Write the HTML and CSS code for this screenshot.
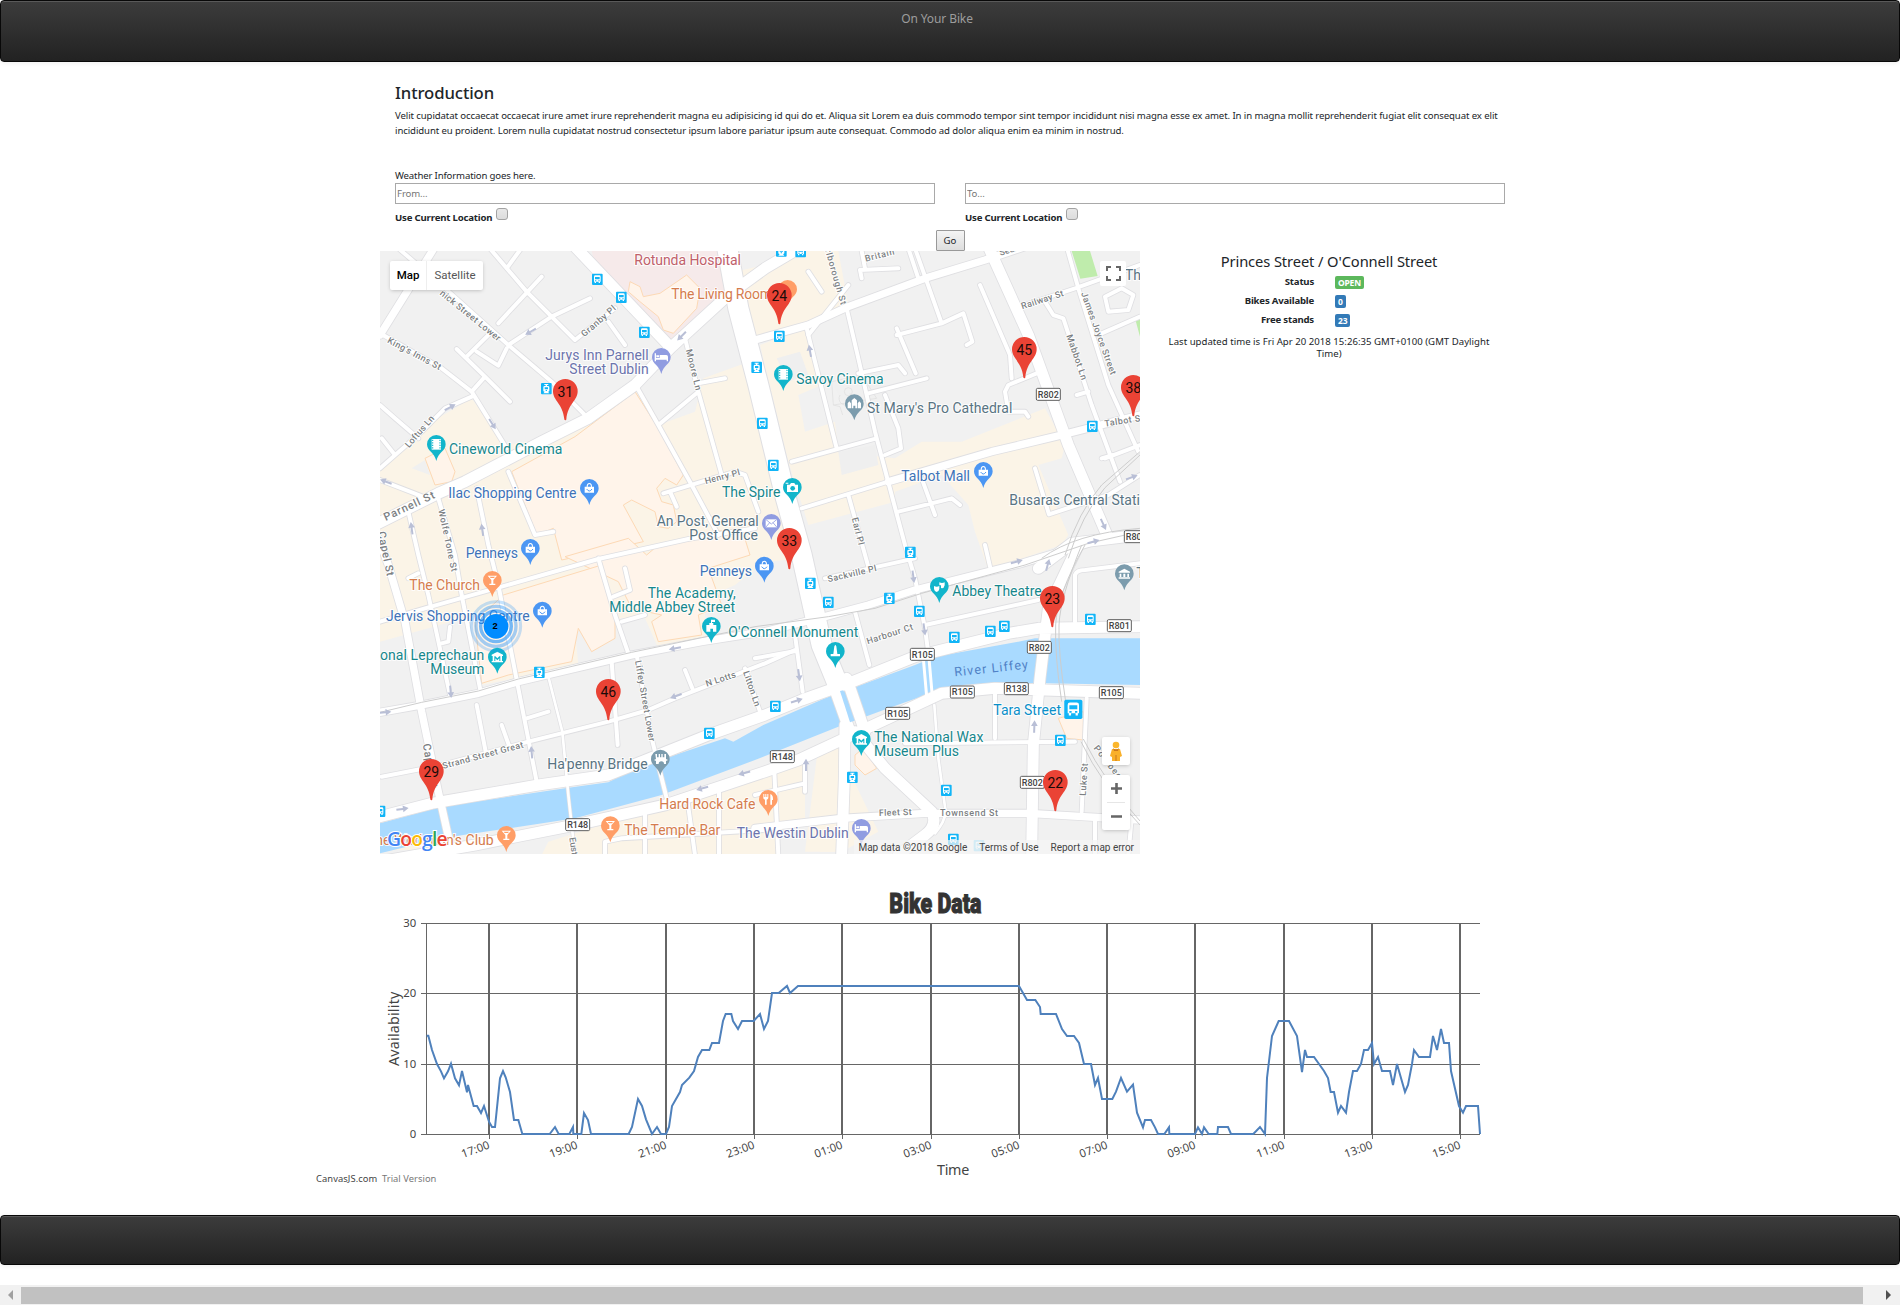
FILE: index.html
```html
<!DOCTYPE html>
<html lang="en">
<head>
<meta charset="utf-8">
<title>On Your Bike</title>
<link rel="stylesheet" href="styles.css">
</head>
<body>
<header class="bar top-bar">On Your Bike</header>

<main class="container">
  <section class="intro">
    <h1>Introduction</h1>
    <p class="line-a">Velit cupidatat occaecat occaecat irure amet irure reprehenderit magna eu adipisicing id qui do et. Aliqua sit Lorem ea duis commodo tempor sint tempor incididunt nisi magna esse ex amet. In in magna mollit reprehenderit fugiat elit consequat ex elit</p>
    <p class="line-b">incididunt eu proident. Lorem nulla cupidatat nostrud consectetur ipsum labore pariatur ipsum aute consequat. Commodo ad dolor aliqua enim ea minim in nostrud.</p>
    <p class="weather">Weather Information goes here.</p>
  </section>

  <form class="journey">
    <div class="field">
      <input class="place" type="text" placeholder="From...">
      <label class="locate">Use Current Location <span class="check"></span></label>
    </div>
    <div class="field">
      <input class="place" type="text" placeholder="To...">
      <label class="locate">Use Current Location <span class="check"></span></label>
    </div>
  </form>
  <div class="go-row"><button class="go" type="button">Go</button></div>

  <div class="columns">
    <div class="map">
      <svg class="map-canvas" viewBox="15 18 2280 1809" width="760" height="603">
        <defs>
          <path id="pin" d="M0-28a28 28 0 0 1 28 28c0 20-22 24-28 50c-6-26-28-30-28-50a28 28 0 0 1 28-28z"/>
          <path id="stand" d="M0-38a37 37 0 0 1 37 37c0 28-30 38-34 84a3 3 0 0 1-6 0c-4-46-34-56-34-84a37 37 0 0 1 37-37z"/>
          <g id="bus"><rect x="-16" y="-17" width="32" height="34" rx="3" fill="#12b5f7"/><path fill="#fff" d="M-10-8q0-4 4-4h12q4 0 4 4v15h-2v4h-4v-4h-8v4h-4v-4h-2z"/><path fill="#12b5f7" d="M-7-7h14v7h-14zM-7 3h4v3h-4zM3 3h4v3h-4z"/></g>
          <g id="tram"><rect x="-16" y="-17" width="32" height="34" rx="3" fill="#12b5f7"/><path fill="#fff" d="M-6-14h12v3h-4v3h3q4 0 4 4v10q0 3-4 3l4 5h-18l4-5q-4 0-4-3v-10q0-4 4-4h3v-3h-4z"/><path fill="#12b5f7" d="M-5-4h10v6h-10zM-2 4h4v3h-4z"/></g>
          <path id="arrow" fill="#b9bfd6" d="M-18-3h20v-7l17 10-17 10v-7h-20z"/>
          <path id="bag" fill="#fff" d="M-14-5h6q0-11 8-11t8 11h6v18h-28zM-5-5h10q0-8-5-8t-5 8z"/>
          <path id="glass" fill="#fff" d="M-14-14h28l-11 13v11h6v4h-18v-4h6v-11zM-8-11l3 4h10l3-4z"/>
          <path id="bed" fill="#fff" d="M-20-12h4v14h11v-9h20q5 0 5 5v14h-4v-5h-32v5h-4zM-15-6h8v6h-8z"/>
          <g id="film"><path fill="#fff" d="M-14-16h28v32h-28z"/><path stroke="#12b5cb" stroke-width="3.500" stroke-dasharray="4 3.500" d="M-11-14V16M11-14V16"/></g>
          <path id="museum" fill="#fff" fill-rule="evenodd" d="M-17-7l17-9 17 9v4h-3v15h3v4h-34v-4h3v-15h-3zM-9-2v14h3v-8l6 6 6-6v8h3v-14h-3l-6 6-6-6z"/>
        </defs>

        <rect x="0" y="0" width="2310" height="1840" fill="#f1f1f1"/>

        <g fill="#fbf4e7">
          <path d="M15 665L170 530 290 460 390 600 520 580 640 515 780 430 850 540 960 500 985 400 1110 355 1150 420 1290 940 1170 950 1080 1020 990 1060 990 1190 850 1210 810 1120 740 1120 600 1160 610 1260 320 1320 300 1110 160 1150 15 1190z"/>
          <path d="M1170 60L1300 18 1390 18 1420 180 1290 240 1140 290 1080 80z"/>
          <path d="M1155 300L1290 250 1340 420 1270 450 1290 560 1380 530 1390 620 1560 640 1640 590 1760 590 2010 490 2070 600 2060 640 1990 660 2080 870 2060 900 1840 975 1800 860 1780 780 1700 690 1560 740 1560 770 1300 840 1240 650z"/>
          <path d="M1330 1500h55l125 260-110 60h-110z M15 1750L200 1815H15zM520 1790L1160 1590 1210 1830H500zM1140 1580L1290 1530V1740L1140 1760z"/>
          <path d="M1335 1505h60v315h-60z"/>
        </g>
        <path d="M650 18H1070L1100 90 880 300 660 60z" fill="#f6eaea"/>
        <path d="M1205 340l70-20 25 70-60 20zM1390 620l110-20 10 60-110 30z" fill="#efefef"/>
        <path d="M2090 18h55l23 75-52 8zM2280 220l15-5v60z" fill="#bfecac"/>
        <path d="M1370 410l140-20 30 90-130 10z M110 670l40-25 15 45z" fill="#f0f0f0"/>

        <g fill="#fff4ea" stroke="#fdd9b5" stroke-width="3">
          <path d="M410 680L600 575 780 440 850 550 925 690 905 720 870 700 845 730 860 770 895 780 905 830 880 850 850 845 840 800 770 765 745 780 805 890 560 945 535 850 485 870z"/>
          <path d="M570 935L760 880 815 930 850 900 985 880 1015 860 1100 850 1125 930 1000 970 1040 1080 970 1110 980 1170 850 1190 830 1130 860 1110 770 1090 730 1010z"/>
          <path d="M385 1050L680 960 720 1110 720 1180 650 1220 610 1150 590 1250 400 1290 320 1315 300 1130z"/>
          <path d="M765 110l30 15 10 30 50-10 80-55 40 40-10 60-70 75-30-10-15-40-55-45-35-30z"/>
          <path d="M150 640l60-30 30 70-10 30-50 10zM1440 1530l25-20 40 60-35 20-30-30z"/>
          <path d="M2050 1420l75-20v85l-50-5z"/>
        </g>
        <g fill="none" stroke="#dedede" stroke-width="2"><path d="M1370 410l90-20 45 70-130 20zM1395 450a20 20 0 1 0 30-5M1375 480l20 5 8 25"/><circle cx="1420" cy="440" r="12"/></g>

        <path fill="#a9daff" d="M15 1735L200 1685 570 1630 700 1612 760 1580 870 1540 1050 1480 1075 1490 1165 1440 1350 1360 1620 1260 1680 1235 1930 1190 1980 1180H2295V1320L2010 1315 1860 1312 1710 1330 1540 1390 1390 1445 1140 1545 860 1650 600 1720 200 1780 15 1825z"/>

        <defs>
          <g id="minor">
            <path d="M70 10L210 130 400 300 530 410 640 520M340 5L455 140 600 285 720 190M500 95L370 235M395 70L435 15M400 300L530 215 645 160M700 230L750 300M15 265L200 370 290 440 395 610M290 440L330 395 405 470M330 395L245 312M275 335L345 265M305 320L370 362 395 310M15 670L140 560 210 490 290 455M15 480L60 520 130 580M20 580L60 630"/>
            <path d="M930 280L970 440 1040 690M970 415L1050 400M850 540L970 440M785 425L850 540 950 720 1030 870M865 745L1080 680 1110 690 1150 800M885 740L905 785M15 705L170 765M100 800L130 930 160 1050 225 1350M190 760L240 930 260 1050 315 1330M305 730L340 900 370 1020 430 1330 485 1610M400 680L480 870 535 860M100 1000L130 985"/>
            <path d="M15 1130L150 1090 380 1025 670 942 940 882 1140 850M670 940L720 1110 760 1225M750 970L765 1035 715 1055M740 1130L810 1110M20 1595L200 1560 460 1490 700 1430 820 1395 900 1360 1170 1255 1260 1215M785 1230L830 1480 875 1660M710 1250L728 1500M305 1380L332 1520M380 1440L405 1510M455 1420L520 1400M930 1275L952 1330M200 1195L220 1190 225 1145M1110 1270L1155 1400"/>
            <path d="M1295 250L1385 610M1250 650L1505 580M1415 190L1450 340 1500 560 1550 750 1590 900 1620 1000 1650 1150 1662 1240M1620 10L1700 235 1565 270M1700 235L1765 205 1792 290 1775 300M1565 250L1622 385M1450 385L1570 360 1590 385M1480 445L1655 400M1530 450L1570 550 1578 610 1530 630M1815 120L1905 330 1910 400M1985 385L1900 420 1890 440 1900 500 1950 500 1960 515M1460 100L1455 75 1570 70M1600 10L1630 100M1460 18L1470 70"/>
            <path d="M1920 190L2100 130 2295 60M2075 5L2110 130 2200 420 2290 620M2010 170L2035 210 2065 220 2150 480 2235 710M2190 155L2200 200 2260 195 2275 150 2240 130zM2180 265L2295 215M2190 640L2295 600M2180 640L2215 630M2105 450L2140 440"/>
            <path d="M1280 790L1540 710M1570 800L1730 760 1755 780M1640 700L1680 810M1420 750L1480 965M1350 1000L1620 940M1440 1100L1483 1260M1650 1140L1990 1065M1260 1170L1283 1340M1140 1240L1262 1218M1860 1340V1480M1590 1495L2100 1490M2135 1360L2120 1700M1980 670L2022 808 2200 750 2295 690M2100 1130V990Q2105 975 2130 975L2295 955M1830 900L1845 965"/>
            <path d="M1197 1560L1210 1830M1290 1530V1640M1140 1650L1290 1615M1032 1625V1830M935 1650L960 1830M810 1700V1830M690 1830V1790L740 1780 1170 1755M1300 270L1420 120M1300 80L1340 140M2160 1720V1830M2270 1720L2260 1830"/>
          </g>
          <g id="lane">
            <path d="M520 1295L562 1460 580 1650 600 1830M1678 1380L1690 1540 1712 1700Q1710 1730 1680 1765"/>
          </g>
          <g id="medium">
            <path d="M180 5L15 270M10 880L40 960 90 1130 140 1400 190 1640 230 1820M15 1402L140 1380 310 1345 430 1310 770 1230 980 1190 1170 1160 1350 1115 1480 1080 1620 1035 1940 955 2140 895M1140 285L1300 240 1420 185 1650 100 1830 45 1950 5M1540 710L1850 620 2060 570 2295 510M1140 1750L1400 1720 1650 1705 1960 1705 2295 1725"/>
          </g>
          <g id="major">
            <path d="M600 5L885 305M10 835L190 745 270 710 500 590 640 520 780 420 885 310 1060 150 1170 70 1280 5M15 1715L170 1675 490 1620 700 1590 850 1530 1000 1470 1170 1410 1280 1365 1420 1315 1620 1235 1900 1165 1990 1150 2295 1145M15 1850L300 1800 600 1740 870 1680 1170 1580 1270 1545 1420 1475 1540 1420 1700 1345 1860 1330 2295 1345M1840 5L1960 270 2080 600 2200 880M1990 970L2090 895 2295 870M2110 900L2020 1090 1995 1300 1975 1500 1970 1830M1410 1440L1408 1600 1400 1830M1440 1460L1530 1570 1670 1700Q1690 1740 1650 1770L1570 1830M1375 1320L1425 1460M1415 1300L1470 1460"/>
          </g>
        </defs>
        <g fill="none" stroke="#dfdfe2" stroke-linecap="round" stroke-linejoin="round">
          <use href="#lane" stroke-width="12"/><use href="#minor" stroke-width="17"/><use href="#medium" stroke-width="27"/><use href="#major" stroke-width="38"/>
          <path stroke-width="66" d="M1055 0L1090 190 1150 420 1230 750 1280 930 1340 1200 1385 1310"/>
        </g>
        <g fill="none" stroke="#fff" stroke-linecap="round" stroke-linejoin="round">
          <use href="#lane" stroke-width="8"/><use href="#minor" stroke-width="12"/><use href="#medium" stroke-width="22"/><use href="#major" stroke-width="33"/>
          <path stroke-width="60" d="M1055 0L1090 190 1150 420 1230 750 1280 930 1340 1200 1385 1310"/>
          <path stroke-width="9" d="M1645 1240L1655 1355M1662 1240L1672 1355"/>
        </g>
        <path d="M1395 1338l10-2 30 92-10 4z" fill="#a9daff"/>
        <g fill="none" stroke="#cdcdcd" stroke-width="3">
          <path d="M15 1402L140 1372 310 1338 430 1302 770 1222 980 1178 1140 1145 1360 1115 1500 1090 1640 1045 1950 960 2140 895 2295 860M2295 620L2180 720Q2110 800 2070 930M2295 630L2190 728Q2120 810 2080 940M2000 940Q2100 865 2295 850M2130 900Q2045 1050 2042 1140T2060 1370M2120 900Q2055 1060 2052 1140T2072 1370M2118 1490Q2180 1620 2295 1740M2125 1482Q2190 1612 2295 1728"/>
        </g>

        <g>
          <use href="#arrow" transform="translate(467 260) rotate(150)"/><use href="#arrow" transform="translate(920 273) rotate(135)"/><use href="#arrow" transform="translate(225 487) rotate(-28)"/><use href="#arrow" transform="translate(352 537) rotate(58)"/><use href="#arrow" transform="translate(33 710) rotate(200)"/><use href="#arrow" transform="translate(110 850) rotate(-98)"/><use href="#arrow" transform="translate(322 855) rotate(-98)"/><use href="#arrow" transform="translate(1305 318) rotate(-100)"/><use href="#arrow" transform="translate(227 1340) rotate(85)"/><use href="#arrow" transform="translate(900 1210) rotate(170)"/><use href="#arrow" transform="translate(903 1353) rotate(160)"/><use href="#arrow" transform="translate(470 1522) rotate(-95)"/><use href="#arrow" transform="translate(82 1692) rotate(-8)"/><use href="#arrow" transform="translate(1108 1584) rotate(165)"/><use href="#arrow" transform="translate(982 1630) rotate(165)"/><use href="#arrow" transform="translate(1615 995) rotate(82)"/><use href="#arrow" transform="translate(1648 1153) rotate(82)"/><use href="#arrow" transform="translate(1272 1290) rotate(82)"/><use href="#arrow" transform="translate(1265 1367) rotate(-18)"/><use href="#arrow" transform="translate(1925 950) rotate(-15)"/><use href="#arrow" transform="translate(2018 960) rotate(-75)"/><use href="#arrow" transform="translate(2155 890) rotate(-15)"/><use href="#arrow" transform="translate(2270 697) rotate(-20)"/><use href="#arrow" transform="translate(2185 838) rotate(65)"/><use href="#arrow" transform="translate(1978 1445) rotate(-88)"/><use href="#arrow" transform="translate(1293 1560) rotate(-90)"/><use href="#arrow" transform="translate(30 1402) rotate(-5)"/>
        </g>

        <g class="street">
          <text transform="translate(193 148) rotate(39)" textLength="225">nick Street Lower</text>
          <text transform="translate(35 292) rotate(28)" textLength="178">King's Inns St</text>
          <text transform="translate(628 277) rotate(-41)" textLength="128">Granby Pl</text>
          <text transform="translate(932 315) rotate(76)" textLength="126">Moore Ln</text>
          <text transform="translate(102 610) rotate(-49)" textLength="118">Loftus Ln</text>
          <text transform="translate(32 828) rotate(-25)" textLength="165" class="big">Parnell St</text>
          <text transform="translate(190 795) rotate(78)" textLength="190">Wolfe Tone St</text>
          <text transform="translate(8 862) rotate(78)" textLength="135" class="big">Capel St</text>
          <text transform="translate(992 718) rotate(-15)" textLength="108">Henry Pl</text>
          <text transform="translate(1350 15) rotate(74)" textLength="172">rlborough St</text>
          <text transform="translate(1472 50) rotate(-14)" textLength="90">Britain</text>
          <text transform="translate(1876 32) rotate(-16)">Sean</text>
          <text transform="translate(1942 193) rotate(-18)" textLength="132">Railway St</text>
          <text transform="translate(2118 145) rotate(70)" textLength="262">James Joyce Street</text>
          <text transform="translate(2074 272) rotate(71)" textLength="142">Mabbot Ln</text>
          <text transform="translate(2190 545) rotate(-9)" textLength="108">Talbot S</text>
          <text transform="translate(1430 820) rotate(76)" textLength="84">Earl Pl</text>
          <text transform="translate(1360 1012) rotate(-13)" textLength="150">Sackville Pl</text>
          <text transform="translate(1478 1198) rotate(-18)" textLength="145">Harbour Ct</text>
          <text transform="translate(780 1248) rotate(80)" textLength="246">Liffey Street Lower</text>
          <text transform="translate(995 1325) rotate(-18)" textLength="94">N Lotts</text>
          <text transform="translate(1104 1282) rotate(71)" textLength="110">Litton Ln</text>
          <text transform="translate(205 1572) rotate(-15)" textLength="250">Strand Street Great</text>
          <text transform="translate(143 1498) rotate(80)" textLength="135" class="big">Capel St</text>
          <text transform="translate(583 1778) rotate(82)">Eust</text>
          <text transform="translate(1512 1713) rotate(-2)" textLength="98">Fleet St</text>
          <text x="1695" y="1712" textLength="174">Townsend St</text>
          <text transform="translate(2132 1653) rotate(-86)" textLength="98">Luke St</text>
          <text transform="translate(2155 1510) rotate(52)" textLength="120">Poolbeg</text>
        </g>
        <text class="river" transform="translate(1739 1294) rotate(-6)" textLength="222">River Liffey</text>

        <g>
          <use href="#bus" x="667" y="103"/><use href="#bus" x="739" y="157"/><use href="#bus" x="808" y="262"/><use href="#tram" x="514" y="431"/><use href="#tram" x="1145" y="367"/><use href="#bus" x="1162" y="535"/><use href="#tram" x="1219" y="18"/><use href="#bus" x="1277" y="20"/><use href="#bus" x="1213" y="274"/><use href="#bus" x="1195" y="661"/><use href="#bus" x="2152" y="544"/><use href="#tram" x="1606" y="922"/><use href="#tram" x="1306" y="1015"/><use href="#bus" x="1360" y="1072"/><use href="#tram" x="1543" y="1060"/><use href="#bus" x="1633" y="1099"/><use href="#bus" x="1738" y="1177"/><use href="#bus" x="1846" y="1159"/><use href="#bus" x="1888" y="1144"/><use href="#bus" x="2146" y="1123"/><use href="#tram" x="493" y="1282"/><use href="#bus" x="1003" y="1465"/><use href="#bus" x="1201" y="1384"/><use href="#bus" x="2056" y="1486"/><use href="#bus" x="1714" y="1636"/><use href="#tram" x="1432" y="1597"/><use href="#bus" x="15" y="1699"/><use href="#bus" x="1735" y="1783"/><use href="#bus" x="1812" y="1802" opacity=".5"/>
          <g transform="translate(2095 1393) scale(1.7)"><use href="#bus"/></g>
        </g>

        <g class="shields">
          <g transform="translate(2020 448)"><rect x="-36" y="-18" width="72" height="36"/><text y="10">R802</text></g>
          <g transform="translate(2284 875)"><rect x="-36" y="-18" width="72" height="36"/><text y="10">R801</text></g>
          <g transform="translate(2233 1142)"><rect x="-36" y="-18" width="72" height="36"/><text y="10">R801</text></g>
          <g transform="translate(1993 1207)"><rect x="-36" y="-18" width="72" height="36"/><text y="10">R802</text></g>
          <g transform="translate(1642 1228)"><rect x="-36" y="-18" width="72" height="36"/><text y="10">R105</text></g>
          <g transform="translate(1762 1341)"><rect x="-36" y="-18" width="72" height="36"/><text y="10">R105</text></g>
          <g transform="translate(1924 1331)"><rect x="-36" y="-18" width="72" height="36"/><text y="10">R138</text></g>
          <g transform="translate(2209 1343)"><rect x="-36" y="-18" width="72" height="36"/><text y="10">R105</text></g>
          <g transform="translate(1568 1405)"><rect x="-36" y="-18" width="72" height="36"/><text y="10">R105</text></g>
          <g transform="translate(1222 1535)"><rect x="-36" y="-18" width="72" height="36"/><text y="10">R148</text></g>
          <g transform="translate(608 1739)"><rect x="-36" y="-18" width="72" height="36"/><text y="10">R148</text></g>
          <g transform="translate(1972 1612)"><rect x="-36" y="-18" width="72" height="36"/><text y="10">R802</text></g>
        </g>

        <g class="poi">
          <g fill="#c0606a"><text x="778" y="60" textLength="320">Rotunda Hospital</text></g>
          <g fill="#d57c4e">
            <text x="889" y="163" textLength="302">The Living Room</text>
            <text x="103" y="1035" textLength="212">The Church</text>
            <text x="853" y="1692" textLength="288">Hard Rock Cafe</text>
            <text x="748" y="1770" textLength="288">The Temple Bar</text>
            <text x="-24" y="1800" textLength="380">The Workman's Club</text>
          </g>
          <g fill="#6c74ad">
            <text x="511" y="346" textLength="310">Jurys Inn Parnell</text><text x="583" y="388" textLength="238">Street Dublin</text>
            <text x="1085" y="1779" textLength="336">The Westin Dublin</text>
          </g>
          <g fill="#4073b8">
            <text x="220" y="760" textLength="384">Ilac Shopping Centre</text><text x="272" y="939" textLength="157">Penneys</text>
            <text x="974" y="993" textLength="157">Penneys</text><text x="33" y="1128" textLength="431">Jervis Shopping Centre</text><text x="1579" y="708" textLength="206">Talbot Mall</text>
          </g>
          <g fill="#16878c">
            <text x="222" y="627" textLength="340">Cineworld Cinema</text><text x="1264" y="418" textLength="262">Savoy Cinema</text>
            <text x="1041" y="756" textLength="175">The Spire</text>
            <text x="818" y="1060" textLength="264">The Academy,</text><text x="703" y="1101" textLength="377">Middle Abbey Street</text>
            <text x="1060" y="1176" textLength="390">O'Connell Monument</text><text x="1732" y="1053" textLength="268">Abbey Theatre</text>
            <text x="15" y="1245" textLength="313">onal Leprechaun</text><text x="166" y="1287" textLength="162">Museum</text>
            <text x="1497" y="1491" textLength="328">The National Wax</text><text x="1497" y="1533" textLength="255">Museum Plus</text>
          </g>
          <g fill="#597483">
            <text x="1476" y="504" textLength="436">St Mary's Pro Cathedral</text><text x="1903" y="780" textLength="392">Busaras Central Stati</text>
            <text x="845" y="843" textLength="306">An Post, General</text><text x="943" y="885" textLength="206">Post Office</text>
            <text x="517" y="1572" textLength="301">Ha'penny Bridge</text><text x="2250" y="105">The</text><text x="2284" y="1000">T</text>
          </g>
          <text fill="#0a8fc9" x="1855" y="1410" textLength="203">Tara Street</text>
        </g>

        <g>
          <g transform="translate(1238 133)"><use href="#pin" fill="#ff9e67"/></g>
          <g transform="translate(352 1006)"><use href="#pin" fill="#ff9e67"/><use href="#glass"/></g>
          <g transform="translate(706 1742)"><use href="#pin" fill="#ff9e67"/><use href="#glass"/></g>
          <g transform="translate(394 1771)"><use href="#pin" fill="#ff9e67"/><use href="#glass"/></g>
          <g transform="translate(1180 1663)"><use href="#pin" fill="#ff9e67"/><path fill="#fff" d="M-15-16h3v9h3v-9h3v9h3v-9h3v12q0 4-5 5v15h-5v-15q-5-1-5-5zM6-16q9 3 8 18h-3v14h-5z"/></g>
          <g transform="translate(859 337)"><use href="#pin" fill="#909ce1"/><use href="#bed"/></g>
          <g transform="translate(1459 1750)"><use href="#pin" fill="#909ce1"/><use href="#bed"/></g>
          <g transform="translate(1189 835)"><use href="#pin" fill="#909ce1"/><path fill="#fff" d="M-17-12h34v24h-34z"/><path fill="none" stroke="#909ce1" stroke-width="2.5" d="M-17-12L0 2 17-12M-17 12L-5-2M17 12L5-2"/></g>
          <g transform="translate(643 730)"><use href="#pin" fill="#4b96f3"/><use href="#bag"/><path d="M-8 2q8 12 16 0" fill="none" stroke="#4b96f3" stroke-width="3"/></g>
          <g transform="translate(466 910)"><use href="#pin" fill="#4b96f3"/><use href="#bag"/><path d="M-8 2q8 12 16 0" fill="none" stroke="#4b96f3" stroke-width="3"/></g>
          <g transform="translate(1168 963)"><use href="#pin" fill="#4b96f3"/><use href="#bag"/><path d="M-8 2q8 12 16 0" fill="none" stroke="#4b96f3" stroke-width="3"/></g>
          <g transform="translate(502 1098)"><use href="#pin" fill="#4b96f3"/><use href="#bag"/><path d="M-8 2q8 12 16 0" fill="none" stroke="#4b96f3" stroke-width="3"/></g>
          <g transform="translate(1825 679)"><use href="#pin" fill="#4b96f3"/><use href="#bag"/><path d="M-8 2q8 12 16 0" fill="none" stroke="#4b96f3" stroke-width="3"/></g>
          <g transform="translate(184 598)"><use href="#pin" fill="#12b5cb"/><use href="#film"/></g>
          <g transform="translate(1225 388)"><use href="#pin" fill="#12b5cb"/><use href="#film"/></g>
          <g transform="translate(1252 727)"><use href="#pin" fill="#12b5cb"/><path fill="#fff" d="M-16-8h8l4-5h10l3 5h8v22h-33zM-20-14h8v3h-8z"/><circle r="7" cx="1" cy="3" fill="#12b5cb"/></g>
          <g transform="translate(1009 1144)"><use href="#pin" fill="#12b5cb"/><path fill="#fff" d="M-15 16v-20h9v-6h5v-10h12v7h-9v3h4v6h9v20h-10v-9h-8v9z"/></g>
          <g transform="translate(1381 1219)"><use href="#pin" fill="#12b5cb"/><path fill="#fff" d="M0-20l3 5 3 23h8v7h-28v-7h8l3-23z"/></g>
          <g transform="translate(1693 1024)"><use href="#pin" fill="#12b5cb"/><path fill="#fff" d="M-16-1q8 4 16 0v9q-2 9-8 9t-8-9zM0-12q8 4 16 0v9q-2 9-8 9l-3-1v-8h-5z"/></g>
          <g transform="translate(367 1236)"><use href="#pin" fill="#12b5cb"/><use href="#museum"/></g>
          <g transform="translate(1459 1483)"><use href="#pin" fill="#12b5cb"/><use href="#museum"/></g>
          <g transform="translate(1438 476)"><use href="#pin" fill="#7c9cad"/><path fill="#fff" d="M-20 14v-15l5-6 5 6v15zM-8 14v-24l8-7 8 7v24h-5v-8h-6v8zM10 14v-15l5-6 5 6v15z"/></g>
          <g transform="translate(2248 986)"><use href="#pin" fill="#7c9cad"/><path fill="#fff" d="M-17-6l17-9 17 9v3h-34zM-14 0h5v10h-5zM-3 0h6v10h-6zM9 0h5v10h-5zM-17 11h34v4h-34z"/></g>
          <g transform="translate(856 1542)"><use href="#pin" fill="#7c9cad"/><path fill="#fff" d="M-15-15h5v10h5v-10h4v10h4v-10h4v10h5v-10h5v16h4v4h-4v10h-6q0-8-8-8t-8 8h-8v-10h-4v-4h4z"/></g>
        </g>

        <g fill="none" stroke="#1b8ff8">
          <circle cx="363" cy="1144" r="74" stroke-width="9" opacity=".25"/><circle cx="363" cy="1144" r="60" stroke-width="10" opacity=".4"/><circle cx="363" cy="1144" r="46" stroke-width="10" opacity=".6"/>
          <circle cx="363" cy="1144" r="37" fill="#008cff" stroke="none"/>
        </g>
        <text class="cluster" x="360" y="1153">2</text>

        <g class="stands">
          <g transform="translate(1213 152)"><use href="#stand"/><text y="16">24</text></g>
          <g transform="translate(1948 314)"><use href="#stand"/><text y="16">45</text></g>
          <g transform="translate(571 440)"><use href="#stand"/><text y="16">31</text></g>
          <g transform="translate(2275 428)"><use href="#stand"/><text y="16">38</text></g>
          <g transform="translate(1243 887)"><use href="#stand"/><text y="16">33</text></g>
          <g transform="translate(2032 1061)"><use href="#stand"/><text y="16">23</text></g>
          <g transform="translate(700 1340)"><use href="#stand"/><text y="16">46</text></g>
          <g transform="translate(169 1580)"><use href="#stand"/><text y="16">29</text></g>
          <g transform="translate(2041 1613)"><use href="#stand"/><text y="16">22</text></g>
        </g>
        <text class="logo" x="36" y="1803" textLength="182"><tspan fill="#4285f4">G</tspan><tspan fill="#ea4335">o</tspan><tspan fill="#fbbc05">o</tspan><tspan fill="#4285f4">g</tspan><tspan fill="#34a853">l</tspan><tspan fill="#ea4335">e</tspan></text>
      </svg>
      <div class="map-types"><span class="type-on">Map</span><span class="type-off">Satellite</span></div>
      <div class="map-btn fullscreen"><svg width="15" height="15" viewBox="0 0 15 15" fill="none" stroke="#666" stroke-width="2"><path d="M1 5V1h4M10 1h4v4M14 10v4h-4M5 14H1v-4"/></svg></div>
      <div class="map-btn pegman"><svg width="14" height="21" viewBox="0 0 14 21"><circle cx="7" cy="4" r="3.3" fill="#fbb62c"/><path d="M3 8h8l2 7-2 1v4H3v-4l-2-1z" fill="#f9b02a"/><path d="M4 7q3 3 6 0l-1 3H5zM6.500 14h1v6h-1z" fill="#c9761c"/></svg></div>
      <div class="zoomer"><svg width="28" height="55" viewBox="0 0 28 55"><path d="M9 13.500h11M14.500 8v11M9 41.500h11" stroke="#666" stroke-width="2.600"/><path d="M5 27.500h18" stroke="#e6e6e6"/></svg></div>
      <div class="credits"><span>Map data ©2018 Google</span><span>Terms of Use</span><span>Report a map error</span></div>
    </div>

    <aside class="station">
      <h2>Princes Street / O'Connell Street</h2>
      <dl class="facts">
        <dt>Status</dt><dd><span class="badge open">OPEN</span></dd>
        <dt>Bikes Available</dt><dd><span class="badge">0</span></dd>
        <dt>Free stands</dt><dd><span class="badge">23</span></dd>
      </dl>
      <p class="updated">Last updated time is Fri Apr 20 2018 15:26:35 GMT+0100 (GMT Daylight<br>Time)</p>
    </aside>
  </div>
</main>

<section class="chart">
  <svg viewBox="0 0 3600 960" width="1200" height="320">
    <text class="chart-title" x="1768" y="129" textLength="276" lengthAdjust="spacingAndGlyphs">Bike Data</text>
    <g stroke="#666" stroke-width="3">
      <path d="M363 160.500H3540M363 370.500H3540M363 583.500H3540M363 793.500H3540M379.500 160V793M568.500 793v14M832.500 793v14M1099.500 793v14M1363.500 793v14M1627.500 793v14M1894.500 793v14M2158.500 793v14M2422.500 793v14M2686.500 793v14M2953.500 793v14M3217.500 793v14M3481.500 793v14"/>
      <path stroke-width="6" d="M567 160V793M831 160V793M1098 160V793M1362 160V793M1626 160V793M1893 160V793M2157 160V793M2421 160V793M2685 160V793M2952 160V793M3216 160V793M3480 160V793"/>
    </g>
    <polyline fill="none" stroke="#4f81bc" stroke-width="6" points="380,497 385,497 396,540 411,582 423,604 432,625 444,604 453,581 465,625 477,646 486,603 501,667 504,645 521,708 531,708 543,729 552,708 567,755 576,771 585,771 600,625 609,603 617,622 630,666 642,750 655,750 667,792 749,792 765,771 776,792 808,792 819,771 820,792 844,792 852,729 864,750 873,792 986,792 996,771 1014,687 1026,708 1038,748 1056,792 1071,771 1083,792 1098,792 1107,771 1116,708 1140,666 1146,645 1168,623 1182,603 1194,561 1206,540 1228,540 1236,519 1257,519 1269,453 1277,432 1294,432 1299,453 1314,477 1326,453 1361,453 1380,432 1392,477 1404,453 1416,369 1436,369 1461,348 1470,369 1494,348 2157,348 2181,390 2206,390 2220,411 2222,432 2268,432 2286,477 2301,498 2322,498 2337,519 2352,582 2373,582 2385,645 2394,624 2406,687 2437,687 2448,665 2463,624 2481,665 2499,644 2511,728 2529,772 2535,750 2553,750 2565,772 2574,792 2593,792 2607,772 2608,792 2685,792 2694,772 2706,792 2712,772 2726,792 2752,792 2754,771 2784,771 2793,792 2860,792 2880,771 2895,792 2901,624 2916,498 2936,453 2967,453 2991,498 3006,606 3015,540 3021,561 3042,561 3072,603 3084,624 3092,666 3102,666 3114,728 3123,708 3138,728 3147,666 3159,603 3171,603 3183,582 3192,540 3204,540 3216,519 3222,582 3234,561 3246,603 3270,603 3279,645 3291,582 3315,666 3324,645 3336,582 3342,540 3357,561 3390,561 3399,498 3411,540 3423,477 3432,519 3447,519 3453,603 3477,708 3489,728 3498,708 3534,708 3540,792"/>
    <g class="ticks">
      <text x="349" y="171">30</text><text x="349" y="381">20</text><text x="349" y="594">10</text><text x="349" y="804">0</text>
      <text transform="translate(571 834) rotate(-20)">17:00</text><text transform="translate(835 834) rotate(-20)">19:00</text><text transform="translate(1102 834) rotate(-20)">21:00</text><text transform="translate(1366 834) rotate(-20)">23:00</text><text transform="translate(1630 834) rotate(-20)">01:00</text><text transform="translate(1897 834) rotate(-20)">03:00</text><text transform="translate(2161 834) rotate(-20)">05:00</text><text transform="translate(2425 834) rotate(-20)">07:00</text><text transform="translate(2689 834) rotate(-20)">09:00</text><text transform="translate(2956 834) rotate(-20)">11:00</text><text transform="translate(3220 834) rotate(-20)">13:00</text><text transform="translate(3484 834) rotate(-20)">15:00</text>
    </g>
    <text class="axis" x="1911" y="915" textLength="97">Time</text>
    <text class="axis" transform="translate(297 588) rotate(-90)" textLength="223">Availability</text>
    <text class="credit" x="48" y="936" textLength="184">CanvasJS.com</text>
    <text class="credit trial" x="246" y="936" textLength="163">Trial Version</text>
  </svg>
</section>

<footer class="bar bottom-bar"></footer>
<div class="scroller"><span class="arrow-left"></span><span class="thumb"></span><span class="arrow-right"></span></div>
</body>
</html>
```
FILE: styles.css
```css
* { box-sizing: border-box; }
body { margin: 0; height: 1305px; overflow: hidden; display: flex; flex-direction: column; background: #fff; color: #212529; font: 9.6px/15px "Noto Sans", "Open Sans", sans-serif; letter-spacing: -.1px; }
h1, h2, p, dl, dd { margin: 0; }
.bar { flex: none; border: 1px solid #080808; border-radius: 4px; background: linear-gradient(#3c3c3c, #222); box-shadow: inset 0 1px 0 rgba(255,255,255,.15), 0 1px 5px rgba(0,0,0,.075); }
.top-bar { height: 62px; padding: 10px 26px 0 0; text-align: center; color: #9d9d9d; font-size: 12px; line-height: 16px; }
.bottom-bar { height: 50px; margin-top: 25px; }

.container { width: 1140px; margin: 0 auto; flex: none; }
.intro { padding: 20px 15px 0; white-space: nowrap; }
h1 { font-size: 16.7px; line-height: 22px; font-weight: 500; }
.intro p { height: 15px; }
.intro .line-a { margin-top: 4px; }
.intro .weather { margin-top: 30px; letter-spacing: -.15px; }
.journey { display: grid; grid-template-columns: 1fr 1fr; column-gap: 30px; padding: 0 15px; }
.field { display: flex; flex-direction: column; }
.place { height: 21px; padding: 0 1px; border: 1px solid #a9a9a9; font: 9.6px "Noto Sans", sans-serif; letter-spacing: -.1px; }
.place::placeholder { color: #757575; }
.locate { display: flex; gap: 4px; height: 26px; padding-top: 6px; font-weight: 700; letter-spacing: -.18px; }
.check { width: 12px; height: 12px; margin-top: -2px; border: 1px solid #a3a3a3; border-radius: 3px; background: linear-gradient(#e8e8e8, #dcdcdc); }
.go-row { display: flex; justify-content: center; height: 21px; }
.go { width: 29px; padding: 0; border: 1px solid #999; border-radius: 1px; background: linear-gradient(#f4f4f4, #dedede); font: 9.6px "Noto Sans", sans-serif; color: #212529; }

.columns { display: flex; }
.map { position: relative; width: 760px; height: 603px; overflow: hidden; font-family: Roboto, sans-serif; letter-spacing: 0; }
.map-canvas { display: block; }
.street text { font: 500 27px Roboto, sans-serif; fill: #7c7f83; stroke: #fff; stroke-width: 5px; paint-order: stroke; }
.street .big { font-size: 33px; }
.river { font: 38px Roboto, sans-serif; fill: #5081c6; }
.poi text { font: 42px Roboto, sans-serif; stroke: #fff; stroke-width: 6px; stroke-opacity: .85; paint-order: stroke; }
.shields rect { fill: #fff; stroke: #5f5f5f; stroke-width: 3px; rx: 4px; }
.shields text { font: 500 27px Roboto, sans-serif; fill: #444; text-anchor: middle; }
.stands { fill: #ea4335; }
.stands text { font: 42px Roboto, sans-serif; fill: #1a0b09; text-anchor: middle; }
.cluster { font: bold 28px "Liberation Sans", sans-serif; text-anchor: middle; fill: #000; }
.logo { font: 600 58px "Open Sans", sans-serif; stroke: #fff; stroke-width: 6px; paint-order: stroke; }
.map-types { position: absolute; left: 10px; top: 10px; display: flex; height: 29px; border-radius: 2px; background: #fff; box-shadow: 0 1px 4px -1px rgba(0,0,0,.3); font-size: 11.5px; line-height: 29px; }
.type-on { width: 37px; text-align: center; font-weight: 500; color: #000; border-right: 1px solid #eee; }
.type-off { width: 56px; text-align: center; color: #565656; }
.map-btn { position: absolute; display: flex; align-items: center; justify-content: center; background: #fff; border-radius: 2px; }
.fullscreen { left: 720px; top: 10px; width: 26px; height: 25px; }
.pegman { left: 722px; top: 486px; width: 28px; height: 28px; box-shadow: 0 1px 4px -1px rgba(0,0,0,.3); }
.zoomer { position: absolute; left: 722px; top: 524px; width: 28px; height: 55px; background: #fff; border-radius: 2px; box-shadow: 0 1px 4px -1px rgba(0,0,0,.3); }
.credits { position: absolute; right: 0; bottom: 0; display: flex; gap: 12px; height: 14px; padding: 0 6px 0 4px; background: rgba(245,245,245,.7); color: #444; font-size: 10px; line-height: 15px; white-space: nowrap; }

.station { width: 380px; padding: 0 2px 0 0; text-align: center; }
h2 { margin-top: 1px; font-size: 14.7px; line-height: 18px; font-weight: 400; white-space: nowrap; }
.facts { display: grid; grid-template-columns: 174px 1fr; column-gap: 21px; grid-auto-rows: 19px; margin-top: 4px; text-align: left; font-weight: 700; letter-spacing: -.2px; }
.facts dt { text-align: right; line-height: 16px; }
.facts dd { display: flex; align-items: flex-start; padding-top: 2px; }
.badge { padding: 0 3px; height: 13px; border-radius: 2px; background: #337ab7; color: #fff; font-size: 8.5px; line-height: 13px; }
.open { background: #5cb85c; }
.updated { margin-top: 5px; line-height: 12px; white-space: nowrap; letter-spacing: .02px; }

.chart { flex: none; width: 1200px; height: 320px; margin: 16px 0 0 300px; letter-spacing: 0; }
.chart svg { display: block; }
.chart-title { font: 900 84px Roboto, sans-serif; fill: #333; stroke: #333; stroke-width: 3px; }
.ticks text { font: 34px "Noto Sans", sans-serif; fill: #444; text-anchor: end; }
.axis { font: 43px "Noto Sans", sans-serif; fill: #444; }
.credit { font: 28px "Noto Sans", sans-serif; fill: #444; }
.trial { fill: #777; }

.scroller { display: flex; flex: none; align-items: center; height: 20px; margin-top: 20px; background: #f1f1f1; }
.arrow-left { width: 13px; margin-right: 8px; border: 5px solid transparent; border-right-color: #a0a0a0; border-left-width: 8px; }
.thumb { flex: none; width: 1842px; height: 17px; background: #c1c1c1; }
.arrow-right { margin-left: 23px; border: 5px solid transparent; border-left-color: #505050; border-right-width: 0; }
```
